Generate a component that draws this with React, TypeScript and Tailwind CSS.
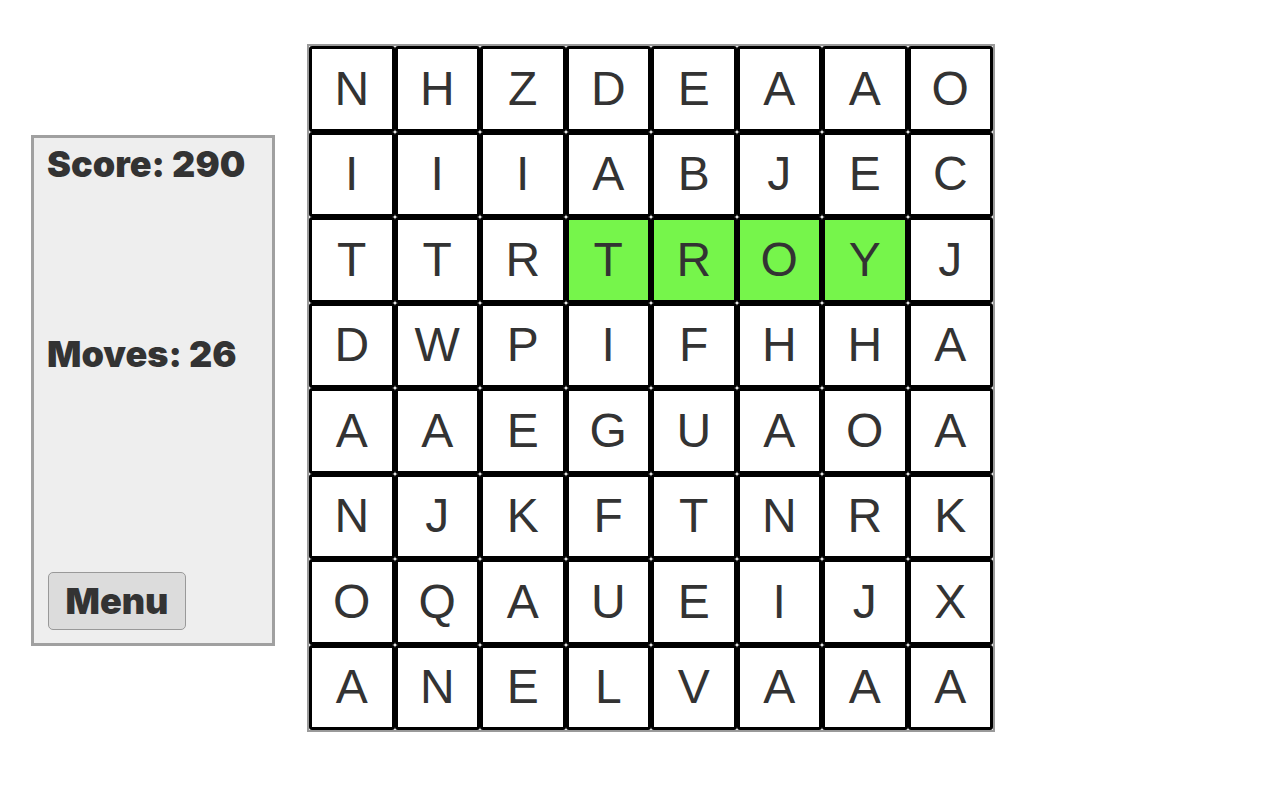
const ROWS = [
  "NHZDEAAO",
  "IIIABJEC",
  "TTRTROYJ",
  "DWPIFHHA",
  "AAEGUAOA",
  "NJKFTNRK",
  "OQAUEIJX",
  "ANELVAAA",
];

// the found word, as "row-col" keys
const FOUND = new Set(["2-3", "2-4", "2-5", "2-6"]);

function Cell({ letter, hit }: { letter: string; hit: boolean }) {
  return (
    <div
      className={`flex h-[85.5px] w-[85.5px] items-center justify-center rounded-[3px] border-[3px] border-black text-[48px] leading-none text-[#333] ${
        hit ? "bg-[#76f54b]" : "bg-white"
      }`}
    >
      {letter}
    </div>
  );
}

export default function App() {
  return (
    <div className="flex min-h-[800px] items-start gap-[32px] bg-white pl-[31px] pt-[44px]">
      <div
        className="mt-[91px] flex h-[511px] w-[244px] flex-col border-[3px] border-[#a0a0a0] bg-[#eeeeee] px-[13px] pt-[4px] text-[#333]"
        style={{ fontFamily: "Inter, 'Noto Sans', sans-serif" }}
      >
        <div className="text-[36px] font-black leading-[44px]">Score: 290</div>
        <div className="mt-[146px] text-[36px] font-black leading-[44px]">Moves: 26</div>
        <button className="ml-[1px] mt-[196px] h-[58px] w-[138px] rounded-[5px] border border-[#999] bg-[#dcdcdc] text-[36px] font-black leading-none text-[#333]">
          Menu
        </button>
      </div>

      <div
        className="grid w-[688px] grid-cols-8 border-2 border-[#9a9a9a] bg-white"
        style={{ fontFamily: "'Liberation Sans', Arial, sans-serif" }}
      >
        {ROWS.map((row, r) =>
          row.split("").map((ch, c) => (
            <Cell key={`${r}-${c}`} letter={ch} hit={FOUND.has(`${r}-${c}`)} />
          ))
        )}
      </div>
    </div>
  );
}
